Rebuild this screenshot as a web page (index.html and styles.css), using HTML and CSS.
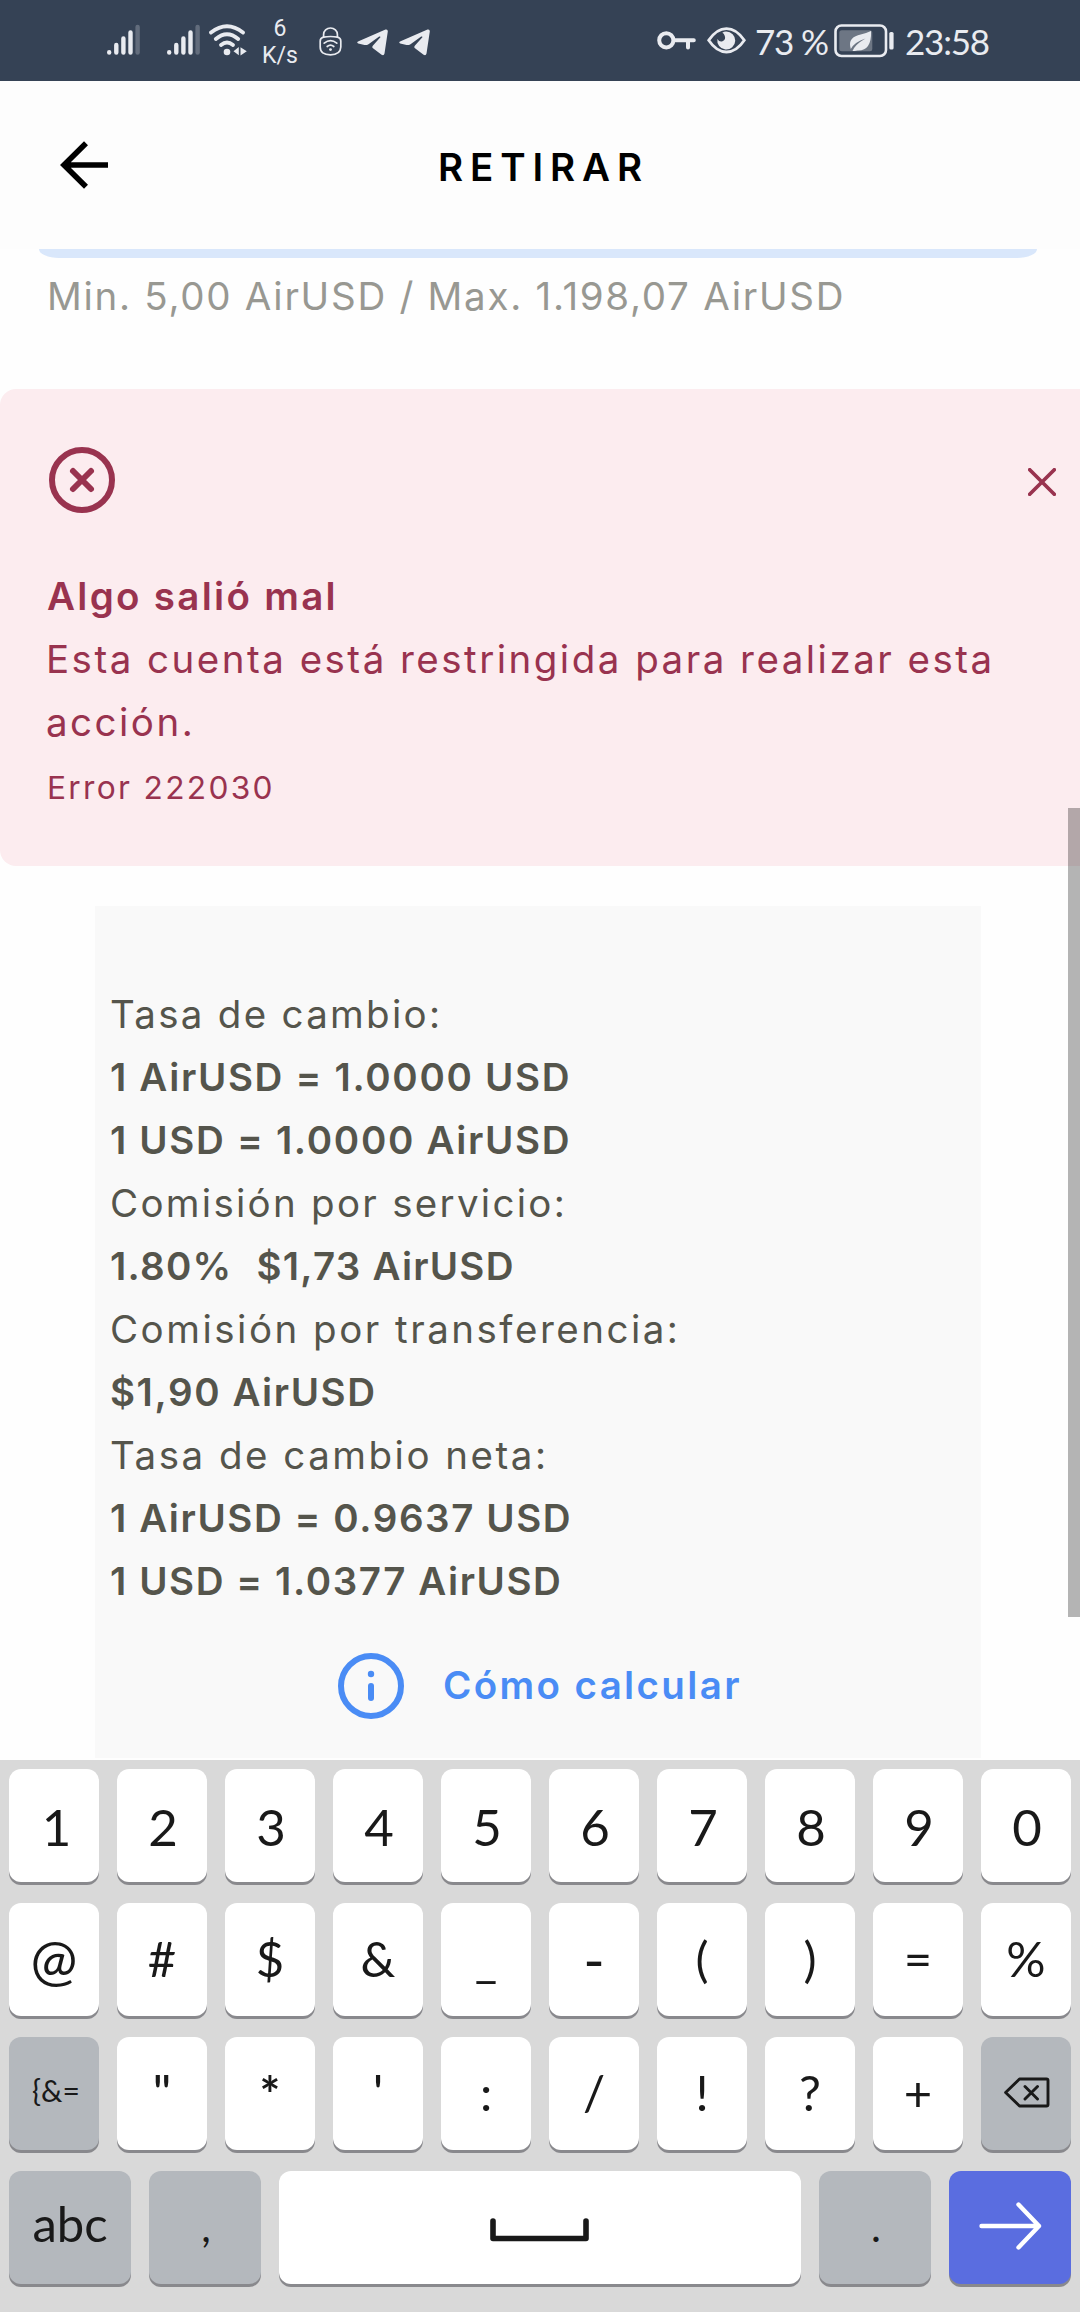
FILE: index.html
```
<!DOCTYPE html>
<html lang="es">
<head>
<meta charset="utf-8">
<title>Retirar</title>
<link rel="stylesheet" href="styles.css">
</head>
<body>
<div class="status">
  <svg class="signal" width="33" height="32" viewBox="0 0 33 32"><g stroke="#e9ebf0" stroke-width="4.4" stroke-linecap="round"><path d="M2.2 28.2v.4M9.3 21v7.6M16.4 14.400v14.200M23.500 8.400v20.200"/><path d="M30.600 3v25.600" opacity=".25"/></g></svg>
  <svg class="signal second" width="33" height="32" viewBox="0 0 33 32"><g stroke="#e9ebf0" stroke-width="4.4" stroke-linecap="round"><path d="M2.2 28.2v.4M9.3 21v7.6M16.4 14.400v14.200M23.500 8.400v20.200"/><path d="M30.600 3v25.600" opacity=".25"/></g></svg>
  <svg class="wifi" width="38" height="32" viewBox="0 0 38 32"><g fill="none" stroke="#e9ebf0" stroke-width="3.8" stroke-linecap="round"><path d="M2 8.500Q18 -4 34 8.500"/><path d="M6.800 15Q18 5.400 29.200 15"/><path d="M12 21Q18 16 24 21"/></g><circle cx="18" cy="28" r="3.300" fill="#e9ebf0"/><path d="M24.500 27.300L29.800 23v8.300zM31.500 23.200l6.300 4-6.300 4.200z" fill="#e9ebf0"/></svg>
  <div class="speed"><span>6</span><span>K/s</span></div>
  <svg class="lock" width="23" height="29" viewBox="0 0 23 29"><g fill="none" stroke="#e9ebf0" stroke-width="1.700" stroke-linecap="round"><path d="M4.600 10V7.500a6.900 6.500 0 0 1 13.800 0V10"/><path d="M4.500 10.200Q11.500 8.800 18.500 10.200Q21.800 11 21.800 14V20Q21.500 27.800 11.500 27.800Q1.200 27.800 1.200 20V14Q1.200 11 4.500 10.200z"/><path d="M5.200 16.200q6.300-5 12.600 0M8.200 19.500q3.300-2.600 6.600 0"/></g><circle cx="11.500" cy="22.600" r="1.400" fill="#e9ebf0"/></svg>
  <svg class="plane" width="31" height="27" viewBox="0 0 31 27"><path d="M1 12.600L28.500.5Q31 0 30.800 2.500L27.500 24.500Q26.900 27 24.600 25.700L16 19.300Q14.600 18 16 16.600L23.400 8.200Q23.600 7 22.200 7.600L11.500 15.200Q9.500 16.400 7.500 16L1.200 14.400Q-.6 13.600 1 12.600z" fill="#e9ebf0"/></svg>
  <svg class="plane" width="31" height="27" viewBox="0 0 31 27"><path d="M1 12.600L28.500.5Q31 0 30.800 2.500L27.500 24.500Q26.900 27 24.600 25.700L16 19.300Q14.600 18 16 16.600L23.400 8.200Q23.600 7 22.200 7.600L11.500 15.200Q9.500 16.400 7.500 16L1.200 14.400Q-.6 13.600 1 12.600z" fill="#e9ebf0"/></svg>
  <svg class="vpn" width="39" height="19" viewBox="0 0 39 19"><g fill="none" stroke="#e9ebf0" stroke-width="4"><circle cx="9.300" cy="9.300" r="7.100"/><path d="M17 9.300H36.800M31 9.300v7.300" stroke-linecap="round"/></g></svg>
  <svg class="eye" width="39" height="27" viewBox="0 0 39 27"><path d="M1.700 13.300Q9.500 1.600 19.500 1.600T37.300 13.300Q29.500 25 19.500 25T1.700 13.300z" fill="none" stroke="#e9ebf0" stroke-width="2.800"/><path d="M19 4.500A9 9 0 1 1 10.400 12Q12.500 15.500 15.500 14.300Q19.300 12.500 17.600 8.500Q17 6.500 15.300 5.800Q17 4.500 19 4.500z" fill="#e9ebf0"/></svg>
  <span class="battery-level">73 %</span>
  <svg class="battery" width="60" height="34" viewBox="0 0 60 34"><rect x="1.500" y="1.500" width="50.500" height="30.500" rx="6" fill="none" stroke="#e9ebf0" stroke-width="2.600"/><rect x="5.300" y="6.300" width="33" height="21" rx="2.500" fill="#fff" opacity=".28"/><rect x="55.300" y="8" width="4.300" height="17.500" rx="1.600" fill="#e9ebf0"/><path d="M37 7Q37.800 27 23.500 26.500Q20.500 27 18.500 27Q21 20.500 31.500 14.500Q20.500 18 16.800 25Q13.500 14.500 24 11.300Q32 9.500 37 7z" fill="#e9ebf0"/></svg>
  <span class="clock">23:58</span>
</div>

<header class="topbar">
  <svg class="back" width="48" height="48" viewBox="0 0 48 48"><path d="M26 2.200L4 24l22 21.800M4 24h44" fill="none" stroke="#000" stroke-width="5.600"/></svg>
  <h1 class="title">RETIRAR</h1>
</header>

<main class="content">
  <div class="field"></div>
  <p class="limits">Min. 5,00 AirUSD / Max. 1.198,07 AirUSD</p>

  <section class="alert">
    <div class="alert-icons">
      <svg width="66" height="66" viewBox="0 0 66 66"><g fill="none" stroke="#99334f" stroke-width="6"><circle cx="33" cy="33" r="30"/><path d="M24 24l18 18M42 24L24 42" stroke-linecap="round"/></g></svg>
      <svg class="close" width="28" height="28" viewBox="0 0 28 28"><path d="M1.700 1.700l24.600 24.600M26.300 1.700L1.700 26.300" fill="none" stroke="#99334f" stroke-width="3.700" stroke-linecap="round"/></svg>
    </div>
    <h2 class="alert-title">Algo salió mal</h2>
    <p class="alert-text">Esta cuenta está restringida para realizar esta acción.</p>
    <p class="alert-code">Error 222030</p>
  </section>

  <section class="rates">
    <p>Tasa de cambio:</p>
    <p class="value">1 AirUSD = 1.0000 USD</p>
    <p class="value">1 USD = 1.0000 AirUSD</p>
    <p>Comisión por servicio:</p>
    <p class="value fee"><span>1.80%</span><span>$1,73 AirUSD</span></p>
    <p class="wide">Comisión por transferencia:</p>
    <p class="value tight">$1,90 AirUSD</p>
    <p class="wide">Tasa de cambio neta:</p>
    <p class="value tight">1 AirUSD = 0.9637 USD</p>
    <p class="value tight">1 USD = 1.0377 AirUSD</p>
    <a class="how">
      <svg width="66" height="66" viewBox="0 0 66 66"><circle cx="33" cy="33" r="30" fill="none" stroke="#4a8cf5" stroke-width="6"/><circle cx="33" cy="21" r="3.200" fill="#4a8cf5"/><path d="M33 33v12" stroke="#4a8cf5" stroke-width="6" stroke-linecap="round"/></svg>
      <span>Cómo calcular</span>
    </a>
  </section>
  <div class="scrollbar"></div>
</main>

<div class="keyboard">
  <div class="row digits">
    <span class="key one">1</span><span class="key">2</span><span class="key">3</span><span class="key">4</span><span class="key">5</span><span class="key">6</span><span class="key">7</span><span class="key">8</span><span class="key">9</span><span class="key">0</span>
  </div>
  <div class="row">
    <span class="key at">@</span><span class="key">#</span><span class="key">$</span><span class="key">&amp;</span><span class="key">_</span><span class="key dash">-</span><span class="key">(</span><span class="key">)</span><span class="key">=</span><span class="key">%</span>
  </div>
  <div class="row">
    <span class="key dark small">{&amp;=</span><span class="key quote">"</span><span class="key star">*</span><span class="key quote">'</span><span class="key">:</span><span class="key">/</span><span class="key">!</span><span class="key">?</span><span class="key">+</span><span class="key dark icon"><svg width="46" height="32" viewBox="0 0 46 32"><path d="M15.500 2H42.500Q44 2 44 3.500V27.500Q44 29 42.500 29H15.500L1.600 15.500zM21 9.500l12.500 12.500M33.500 9.500L21 22" fill="none" stroke="#191919" stroke-width="2.900" stroke-linecap="round" stroke-linejoin="round"/></svg></span>
  </div>
  <div class="row bottom">
    <span class="key dark">abc</span><span class="key dark punct">,</span><span class="key space"><svg width="99" height="24" viewBox="0 0 99 24"><path d="M3 3V20.500H96V3" fill="none" stroke="#191919" stroke-width="5.600" stroke-linecap="round" stroke-linejoin="round"/></svg></span><span class="key dark punct">.</span><span class="key enter"><svg width="63" height="48" viewBox="0 0 63 48"><path d="M2.500 24H60M39.500 2.500L60 24L39.500 45.500" fill="none" stroke="#fff" stroke-width="4.400" stroke-linecap="round" stroke-linejoin="round"/></svg></span>
  </div>
</div>
</body>
</html>
```
FILE: styles.css
```
* { box-sizing: border-box; }

body {
  margin: 0;
  width: 1080px;
  height: 2312px;
  display: flex;
  flex-direction: column;
  background: #fefefe;
  font-family: Inter, sans-serif;
  overflow: hidden;
}

h1, h2, p { margin: 0; font-size: 38.5px; white-space: nowrap; }
svg { display: block; flex: none; }

/* Status bar */
.status {
  height: 81px;
  flex: none;
  display: flex;
  align-items: flex-start;
  background: #354255;
  color: #e9ebf0;
  white-space: nowrap;
}
.signal { margin: 24px 0 0 106.5px; }
.signal.second { margin-left: 27.500px; }
.wifi { margin: 24px 0 0 9px; }
.speed {
  width: 36px;
  margin: 15px 0 0 15px;
  display: flex;
  flex-direction: column;
  align-items: center;
  font: 23px/27px Roboto, sans-serif;
}
.lock { margin: 27px 0 0 21px; }
.plane { margin: 29px 0 0 15px; }
.plane + .plane { margin-left: 11px; }
.vpn { margin: 31px 0 0 227px; }
.eye { margin: 27px 0 0 11px; }
.battery-level, .clock {
  font: 35px/40px Lato, sans-serif;
  letter-spacing: -1.2px;
  margin-top: 21px;
}
.battery-level { width: 79px; margin-left: 9px; }
.battery { margin: 24px 0 0 0; }
.clock { margin-left: 11px; }

/* Title bar */
.topbar {
  height: 168px;
  flex: none;
  display: grid;
  grid-template-columns: 108px 1fr 108px;
  align-items: center;
  background: #fdfdfd;
}
.back { justify-self: end; }
.title {
  font-weight: 600;
  line-height: 60px;
  letter-spacing: 6.9px;
  text-align: center;
  padding: 4px 0 0 7px;
  color: #000;
}

/* Scrolled page */
.content {
  height: 1511px;
  flex: none;
  position: relative;
  overflow: hidden;
}
.field {
  height: 9px;
  margin: 0 43px 0 39px;
  border-radius: 0 0 20px 20px / 0 0 9px 9px;
  background: #d9e7fb;
}
.limits {
  margin: 7px 0 0 47px;
  line-height: 63px;
  letter-spacing: 1.72px;
  color: #989892;
}
.alert {
  height: 477px;
  margin-top: 61px;
  padding: 58px 0 0 47px;
  border-radius: 16px 0 0 16px;
  background: #fcecef;
  color: #99334f;
}
.alert-icons {
  display: flex;
  justify-content: space-between;
  align-items: center;
  margin: 0 24px 52px 2px;
}
.close { margin-top: 3px; }
.alert-title { font-weight: 600; line-height: 63px; letter-spacing: 2.3px; }
.alert-text {
  width: 980px;
  line-height: 63px;
  letter-spacing: 2.48px;
  margin-left: -1px;
  white-space: normal;
}
.alert-code { font-size: 31.700px; line-height: 63px; letter-spacing: 2.3px; margin-top: 2px; }

.rates {
  width: 886px;
  height: 852px;
  margin: 40px 0 0 95px;
  padding: 77px 0 0 15px;
  background: #f9f9f9;
  color: #55554c;
}
.rates p { line-height: 63px; letter-spacing: 2.28px; }
.rates .wide { letter-spacing: 2.5px; }
.rates .value { font-weight: 600; letter-spacing: 1.68px; }
.rates .tight { letter-spacing: 1.58px; }
.rates .fee { display: flex; gap: 24px; letter-spacing: 1.25px; }
.how {
  display: flex;
  align-items: center;
  gap: 39px;
  margin: 40px 0 0 228px;
  color: #4a8cf5;
  font-size: 38.5px;
  font-weight: 600;
  line-height: 60px;
  letter-spacing: 2.37px;
}
.how span { margin-bottom: 3px; }
.scrollbar {
  position: absolute;
  top: 559px;
  right: 0;
  width: 12px;
  height: 809px;
  background: rgba(0, 0, 0, 0.29);
}

/* Keyboard */
.keyboard {
  flex: 1;
  display: flex;
  flex-direction: column;
  gap: 21px;
  padding: 9px 9px 0;
  background: #d9d9d9;
  color: #191919;
  font-family: Lato, sans-serif;
}
.row { display: grid; grid-template-columns: repeat(10, 90px); gap: 18px; }
.row.bottom { grid-template-columns: 122px 112px 522px 112px 122px; }
.key {
  height: 113px;
  border-radius: 12px;
  background: #fff;
  box-shadow: 0 3px 0 #89898d;
  font-size: 49px;
  line-height: 111px;
  text-align: center;
}
.digits .key { font-size: 51px; line-height: 115px; padding-left: 2px; }
.digits .one { padding-left: 5px; }
.at { font-size: 56px; }
.dash { font-size: 58px; }
.star { font-weight: 700; line-height: 114px; }
.quote { font-weight: 500; line-height: 108px; }
.dark { background: #b4b8bd; }
.small { font-size: 30px; line-height: 107px; padding-left: 4px; }
.bottom .key { line-height: 105px; }
.bottom .punct { font-size: 42px; line-height: 110px; padding-left: 2px; }
.icon { padding: 40px 0 0 23px; }
.space { padding: 47px 0 0 211px; }
.enter { padding: 31px 0 0 30px; background: #5a6de0; }
```
